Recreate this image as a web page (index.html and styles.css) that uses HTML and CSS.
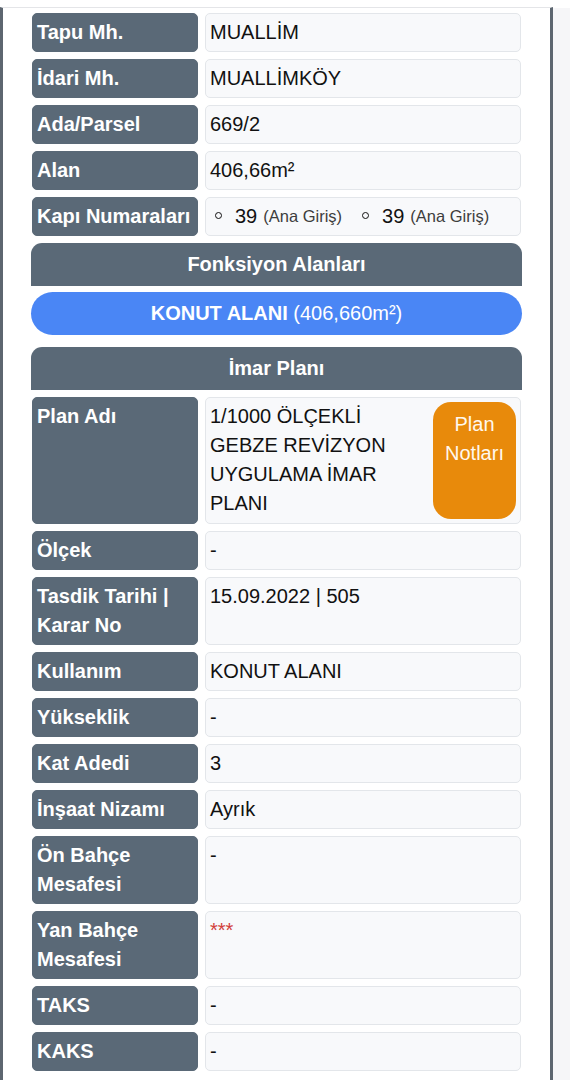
FILE: index.html
```html
<!DOCTYPE html>
<html lang="tr">
<head>
<meta charset="utf-8">
<title>Parsel Bilgisi</title>
<link rel="stylesheet" href="styles.css">
</head>
<body>
<div class="page">
  <main class="panel">
    <div class="row"><div class="label">Tapu Mh.</div><div class="value">MUALLİM</div></div>
    <div class="row"><div class="label">İdari Mh.</div><div class="value">MUALLİMKÖY</div></div>
    <div class="row"><div class="label">Ada/Parsel</div><div class="value">669/2</div></div>
    <div class="row"><div class="label">Alan</div><div class="value">406,66m²</div></div>
    <div class="row"><div class="label">Kapı Numaraları</div>
      <div class="value doors">
        <span class="door"><span class="ring"></span>39 <small>(Ana Giriş)</small></span>
        <span class="door"><span class="ring"></span>39 <small>(Ana Giriş)</small></span>
      </div>
    </div>
    <div class="section-head">Fonksiyon Alanları</div>
    <div class="pill"><b>KONUT ALANI</b> (406,660m²)</div>
    <div class="section-head imar">İmar Planı</div>
    <div class="row"><div class="label">Plan Adı</div>
      <div class="value plan">
        <span class="plan-name">1/1000 ÖLÇEKLİ GEBZE REVİZYON UYGULAMA İMAR PLANI</span>
        <span class="plan-btn">Plan Notları</span>
      </div>
    </div>
    <div class="row"><div class="label">Ölçek</div><div class="value">-</div></div>
    <div class="row"><div class="label">Tasdik Tarihi | Karar No</div><div class="value">15.09.2022 | 505</div></div>
    <div class="row"><div class="label">Kullanım</div><div class="value">KONUT ALANI</div></div>
    <div class="row"><div class="label">Yükseklik</div><div class="value">-</div></div>
    <div class="row"><div class="label">Kat Adedi</div><div class="value">3</div></div>
    <div class="row"><div class="label">İnşaat Nizamı</div><div class="value">Ayrık</div></div>
    <div class="row"><div class="label">Ön Bahçe Mesafesi</div><div class="value">-</div></div>
    <div class="row"><div class="label">Yan Bahçe Mesafesi</div><div class="value"><span class="danger">***</span></div></div>
    <div class="row"><div class="label">TAKS</div><div class="value">-</div></div>
    <div class="row"><div class="label">KAKS</div><div class="value">-</div></div>
  </main>
  <aside class="strip"></aside>
</div>
</body>
</html>
```

FILE: styles.css
```css
html, body {
  margin: 0;
  padding: 0;
  background: #ffffff;
}
body {
  font-family: "Liberation Sans", Arial, sans-serif;
  font-size: 20px;
  line-height: 29px;
  color: #111;
}
.page {
  display: flex;
  padding-top: 7px;
  min-height: 1100px;
}
.panel {
  width: 491px;
  border-top: 1px solid #e4e5e8;
  border-left: 3px solid #5d6670;
  border-right: 3px solid #5d6670;
  padding: 5px 28px 30px 28px;
  display: flex;
  flex-direction: column;
  gap: 7px;
  background: #fff;
}
.strip {
  flex: 1;
  margin-top: 1px;
  background: #f6f6f8;
}
.row {
  display: grid;
  grid-template-columns: 166px 316px;
  gap: 7px;
  margin: 0 1px;
}
.label {
  background: #5a6977;
  border: 1px solid #5a6977;
  border-radius: 5px;
  color: #fff;
  font-weight: bold;
  padding: 4px 4px;
}
.value {
  background: #f8f9fb;
  border: 1px solid #e3e6ea;
  border-radius: 5px;
  padding: 4px 4px;
}
.doors {
  display: flex;
  align-items: center;
  gap: 20px;
  padding-left: 9px;
}
.door {
  display: inline-flex;
  align-items: center;
  white-space: nowrap;
}
.ring {
  display: inline-block;
  width: 5px;
  height: 5px;
  border: 1.5px solid #111;
  border-radius: 50%;
  margin-right: 13px;
  margin-top: -2px;
}
.door small {
  font-size: 16.5px;
  color: #3d3d3d;
  margin-left: 6px;
}
.section-head {
  background: #5a6977;
  color: #fff;
  font-weight: bold;
  text-align: center;
  border-radius: 11px 11px 0 0;
  padding: 7px 0;
}
.imar {
  margin-top: 5px;
}
.pill {
  margin-top: -1px;
  background: #4a86f5;
  color: #fff;
  text-align: center;
  border-radius: 22px;
  padding: 7px 0;
}
.plan {
  display: flex;
  gap: 5px;
  padding: 4px 4px 4px 4px;
}
.plan-name {
  flex: 1;
}
.plan-btn {
  width: 83px;
  flex: none;
  background: #e88a0b;
  color: #fff8ee;
  text-align: center;
  border-radius: 18px;
  padding: 8px 10px 0;
  box-sizing: border-box;
  min-height: 117px;
}
.danger {
  color: #d23f3c;
}
```
